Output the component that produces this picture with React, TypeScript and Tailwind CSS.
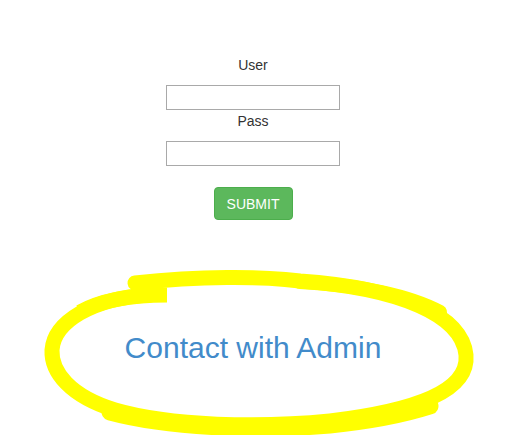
import React from 'react';

export default function App() {
  return (
    <div className="relative w-[506px] h-[435px] overflow-hidden bg-white font-['Liberation_Sans',Arial,sans-serif] text-[#333]">
      <form className="flex flex-col items-center pt-[55px]" onSubmit={(e) => e.preventDefault()}>
        <label className="text-[14px] leading-[20px]">User</label>
        <input type="text" className="mt-[10px] w-[174px] h-[25px] border border-[#a9a9a9] bg-white outline-none" />
        <label className="mt-px text-[14px] leading-[20px]">Pass</label>
        <input type="password" className="mt-[10px] w-[174px] h-[25px] border border-[#a9a9a9] bg-white outline-none" />
        <button
          type="submit"
          className="mt-[21px] w-[79px] h-[33px] rounded-[4px] bg-[#5cb85c] border border-[#4cae4c] text-white text-[14px] leading-[20px]"
        >
          SUBMIT
        </button>
      </form>

      <div className="flex justify-center pt-[111px]">
        <a href="#" className="text-[30px] leading-[34px] text-[#428bca] no-underline">
          Contact with Admin
        </a>
      </div>

      {/* yellow marker circle drawn over the page */}
      <svg
        className="absolute inset-0 pointer-events-none"
        width="506"
        height="435"
        viewBox="0 0 506 435"
        fill="none"
        stroke="#ffff00"
        strokeLinecap="round"
        strokeLinejoin="round"
      >
        <path
          d="M135 283 C 200 276 260 276 300 281 C 400 288 462 315 466 355 C 469 390 420 410 330 421 C 260 428 170 426 115 410 C 70 396 51 372 52 350 C 54 322 92 298 150 295"
          strokeWidth="15"
        />
        <path d="M110 412 C 170 428 260 431 330 425 C 370 421 405 414 430 406" strokeWidth="17" />
        <path d="M167 295 C 130 295 100 301 80 312" strokeWidth="15" strokeLinecap="butt" />
        <path d="M300 282 C 360 285 410 296 440 312" strokeWidth="14" />
      </svg>
    </div>
  );
}
